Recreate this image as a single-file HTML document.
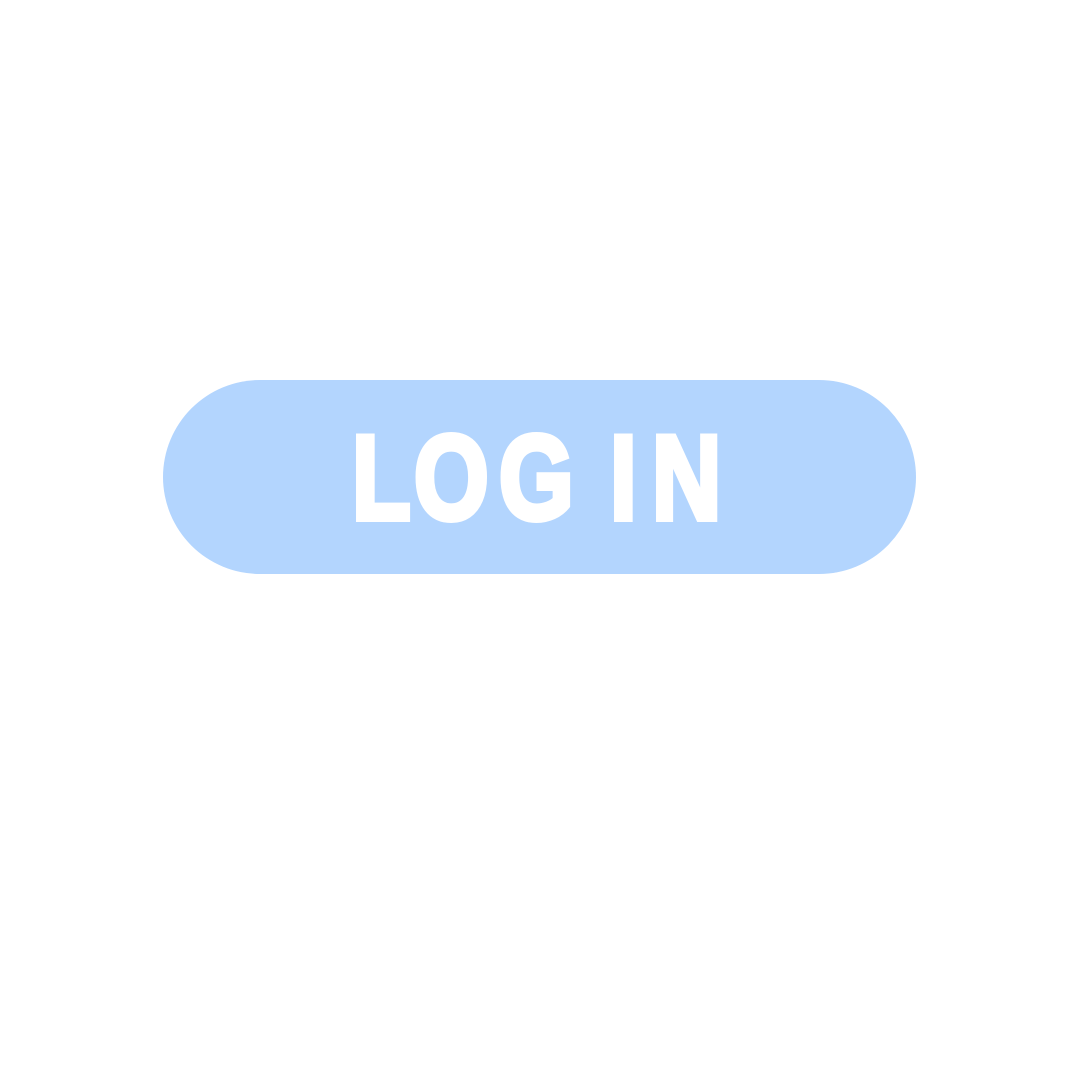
<!DOCTYPE html>
<html><head><style>
html,body{margin:0;padding:0;background:#fff;width:1080px;height:1080px;overflow:hidden}
.pill{position:absolute;left:163px;top:380px;width:753px;height:194px;border-radius:97px;background:#b3d5fe}
.t{position:absolute;top:411px;font-family:"Liberation Sans",sans-serif;font-weight:bold;font-size:120px;line-height:135px;color:#fff;-webkit-text-stroke:6px #fff;transform:scaleX(0.8);transform-origin:left top}
</style></head><body>
<div class="pill"></div>
<span class="t" style="left:352px">L</span>
<span class="t" style="left:414px">O</span>
<span class="t" style="left:499px">G</span>
<span class="t" style="left:610px">I</span>
<span class="t" style="left:652px">N</span>
</body></html>
